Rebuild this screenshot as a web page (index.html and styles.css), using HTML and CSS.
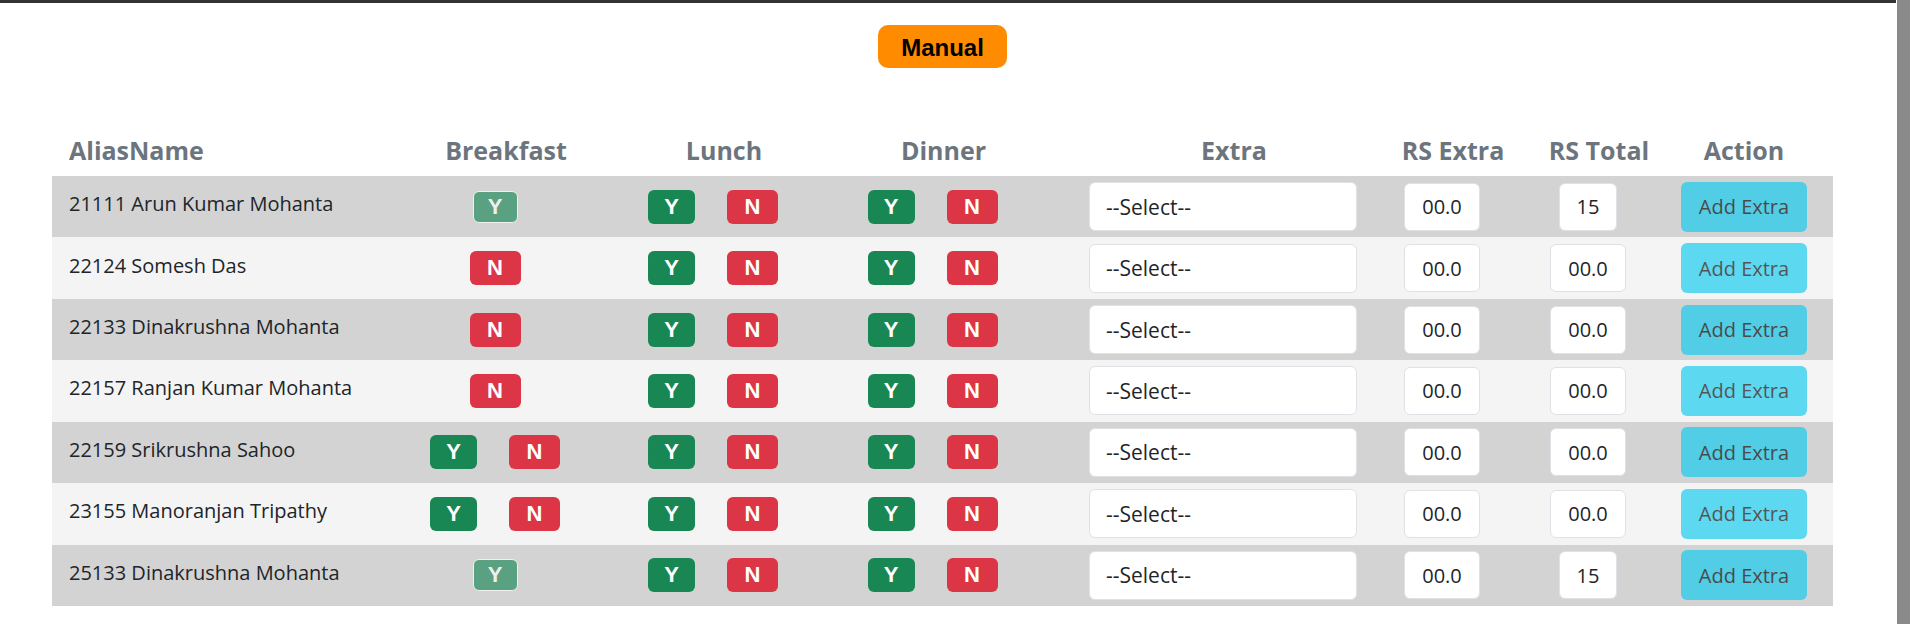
FILE: index.html
```html
<!DOCTYPE html>
<html lang="en">
<head>
<meta charset="utf-8">
<title>Meal Entry</title>
<link rel="stylesheet" href="styles.css">
</head>
<body>
<div class="topbar"></div>
<main class="page">
  <div class="mode"><span class="mode-btn">Manual</span></div>
  <table class="meals">
    <colgroup>
      <col class="w-name"><col class="w-bf"><col class="w-lu"><col class="w-di"><col class="w-ex"><col class="w-rse"><col class="w-rst"><col class="w-act"><col class="w-end">
    </colgroup>
    <thead>
      <tr>
        <th class="left">AliasName</th><th>Breakfast</th><th>Lunch</th><th>Dinner</th><th>Extra</th><th>RS Extra</th><th>RS Total</th><th>Action</th><th></th>
      </tr>
    </thead>
    <tbody>
      <tr>
        <td class="name">21111 Arun Kumar Mohanta</td>
        <td class="c"><span class="yn"><span class="b y off">Y</span></span></td>
        <td class="c"><span class="yn"><span class="b y">Y</span><span class="b n">N</span></span></td>
        <td class="c"><span class="yn"><span class="b y">Y</span><span class="b n">N</span></span></td>
        <td class="c"><select class="sel"><option>--Select--</option></select></td>
        <td class="c"><span class="field">00.0</span></td>
        <td class="c"><span class="field">15</span></td>
        <td class="a"><button class="add" type="button">Add Extra</button></td>
        <td></td>
      </tr>
      <tr>
        <td class="name">22124 Somesh Das</td>
        <td class="c"><span class="yn"><span class="b n">N</span></span></td>
        <td class="c"><span class="yn"><span class="b y">Y</span><span class="b n">N</span></span></td>
        <td class="c"><span class="yn"><span class="b y">Y</span><span class="b n">N</span></span></td>
        <td class="c"><select class="sel"><option>--Select--</option></select></td>
        <td class="c"><span class="field">00.0</span></td>
        <td class="c"><span class="field">00.0</span></td>
        <td class="a"><button class="add" type="button">Add Extra</button></td>
        <td></td>
      </tr>
      <tr>
        <td class="name">22133 Dinakrushna Mohanta</td>
        <td class="c"><span class="yn"><span class="b n">N</span></span></td>
        <td class="c"><span class="yn"><span class="b y">Y</span><span class="b n">N</span></span></td>
        <td class="c"><span class="yn"><span class="b y">Y</span><span class="b n">N</span></span></td>
        <td class="c"><select class="sel"><option>--Select--</option></select></td>
        <td class="c"><span class="field">00.0</span></td>
        <td class="c"><span class="field">00.0</span></td>
        <td class="a"><button class="add" type="button">Add Extra</button></td>
        <td></td>
      </tr>
      <tr>
        <td class="name">22157 Ranjan Kumar Mohanta</td>
        <td class="c"><span class="yn"><span class="b n">N</span></span></td>
        <td class="c"><span class="yn"><span class="b y">Y</span><span class="b n">N</span></span></td>
        <td class="c"><span class="yn"><span class="b y">Y</span><span class="b n">N</span></span></td>
        <td class="c"><select class="sel"><option>--Select--</option></select></td>
        <td class="c"><span class="field">00.0</span></td>
        <td class="c"><span class="field">00.0</span></td>
        <td class="a"><button class="add" type="button">Add Extra</button></td>
        <td></td>
      </tr>
      <tr>
        <td class="name">22159 Srikrushna Sahoo</td>
        <td class="c"><span class="yn"><span class="b y">Y</span><span class="b n">N</span></span></td>
        <td class="c"><span class="yn"><span class="b y">Y</span><span class="b n">N</span></span></td>
        <td class="c"><span class="yn"><span class="b y">Y</span><span class="b n">N</span></span></td>
        <td class="c"><select class="sel"><option>--Select--</option></select></td>
        <td class="c"><span class="field">00.0</span></td>
        <td class="c"><span class="field">00.0</span></td>
        <td class="a"><button class="add" type="button">Add Extra</button></td>
        <td></td>
      </tr>
      <tr>
        <td class="name">23155 Manoranjan Tripathy</td>
        <td class="c"><span class="yn"><span class="b y">Y</span><span class="b n">N</span></span></td>
        <td class="c"><span class="yn"><span class="b y">Y</span><span class="b n">N</span></span></td>
        <td class="c"><span class="yn"><span class="b y">Y</span><span class="b n">N</span></span></td>
        <td class="c"><select class="sel"><option>--Select--</option></select></td>
        <td class="c"><span class="field">00.0</span></td>
        <td class="c"><span class="field">00.0</span></td>
        <td class="a"><button class="add" type="button">Add Extra</button></td>
        <td></td>
      </tr>
      <tr>
        <td class="name">25133 Dinakrushna Mohanta</td>
        <td class="c"><span class="yn"><span class="b y off">Y</span></span></td>
        <td class="c"><span class="yn"><span class="b y">Y</span><span class="b n">N</span></span></td>
        <td class="c"><span class="yn"><span class="b y">Y</span><span class="b n">N</span></span></td>
        <td class="c"><select class="sel"><option>--Select--</option></select></td>
        <td class="c"><span class="field">00.0</span></td>
        <td class="c"><span class="field">15</span></td>
        <td class="a"><button class="add" type="button">Add Extra</button></td>
        <td></td>
      </tr>
    </tbody>
  </table>
</main>
<div class="scrollbar"><div class="thumb"></div></div>
</body>
</html>
```
FILE: styles.css
```css
* { box-sizing: border-box; }
html, body { margin: 0; padding: 0; background: #fff; }
body {
  font-family: "Open Sans", "Noto Sans", sans-serif;
  font-size: 20px;
  color: #212529;
  width: 1896px;
  overflow: hidden;
}
.topbar { height: 3px; background: #333; }
.page { padding: 0 63px 0 52px; }
.mode { text-align: center; padding-top: 22px; }
.mode-btn {
  display: inline-flex;
  align-items: center;
  justify-content: center;
  width: 129px;
  height: 43px;
  padding-top: 3px;
  background: #ff8c00;
  color: #000;
  border-radius: 10px;
  font-family: "Liberation Sans", Arial, sans-serif;
  font-weight: 700;
  font-size: 24px;
}
.meals {
  width: 1781px;
  table-layout: fixed;
  border-collapse: collapse;
  margin-top: 56px;
}
.w-name { width: 314px; }
.w-bf { width: 280px; }
.w-lu { width: 156px; }
.w-di { width: 283px; }
.w-ex { width: 298px; }
.w-rse { width: 140px; }
.w-rst { width: 152px; }
.w-act { width: 138px; }
.w-end { width: 20px; }
.meals th {
  height: 52px;
  padding: 0 0 8px;
  vertical-align: bottom;
  font-size: 25px;
  line-height: 36px;
  font-weight: 700;
  color: #6c757d;
  text-align: center;
  white-space: nowrap;
}
.meals th.left { text-align: left; padding-left: 17px; }
.meals td { height: 61.43px; padding: 0; vertical-align: middle; white-space: nowrap; }
.meals tbody tr:nth-child(odd) td { background: #d3d3d3; }
.meals tbody tr:nth-child(even) td { background: #f4f4f4; }
.meals td.name { padding-left: 17px; padding-bottom: 6px; }
.meals td.c { text-align: center; padding-right: 22px; }
.meals td.a { text-align: center; }
.yn { display: inline-flex; gap: 32px; vertical-align: middle; }
.b {
  display: inline-flex;
  align-items: center;
  justify-content: center;
  height: 34px;
  border-radius: 6px;
  color: #fff;
  font-family: "Liberation Sans", Arial, sans-serif;
  font-weight: 700;
  font-size: 22px;
}
.y { width: 47px; background: #198754; }
.n { width: 51px; background: #dc3545; }
.y.off { width: 45px; height: 32px; opacity: .65; border: 1px solid #fff; }
.sel {
  -webkit-appearance: none;
  appearance: none;
  width: 268px;
  height: 49px;
  border: 1px solid #dee2e6;
  border-radius: 6px;
  background: #fff;
  padding: 0 0 0 16px;
  font-family: inherit;
  font-size: 21px;
  color: #212529;
  vertical-align: middle;
  margin: 0;
}
.field {
  display: inline-flex;
  align-items: center;
  height: 48px;
  padding: 0 17px;
  border: 1px solid #dee2e6;
  border-radius: 6px;
  background: #fff;
  vertical-align: middle;
}
.add {
  width: 126px;
  height: 50px;
  border: 0;
  border-radius: 6px;
  background: #0dcaf0;
  color: #000;
  opacity: .65;
  font-family: inherit;
  font-size: 20px;
  padding: 0;
  vertical-align: middle;
  margin: 0;
}
.scrollbar {
  position: fixed;
  top: 0;
  right: 0;
  bottom: 0;
  width: 17px;
  background: #fff;
}
.thumb { margin-left: 1px; width: 13px; height: 100%; background: #8a8a8a; }
```
